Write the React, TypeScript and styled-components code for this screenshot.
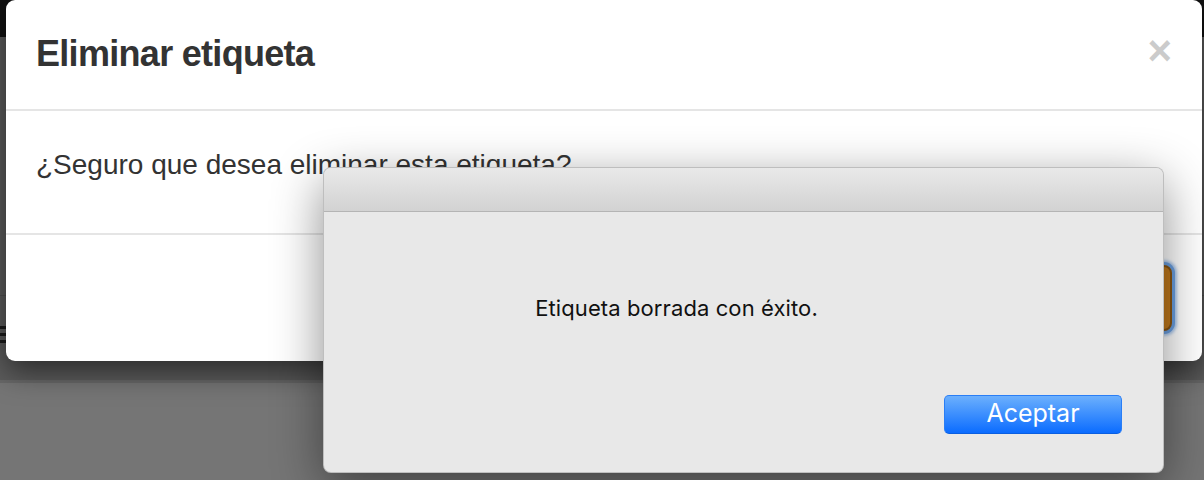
import React from "react";
import styled, { createGlobalStyle } from "styled-components";

const GlobalStyle = createGlobalStyle`
	html, body {
		margin: 0;
		padding: 0;
		background: #757575;
	}
	* {
		box-sizing: border-box;
	}
`;

const Page = styled.div`
	position: relative;
	width: 1204px;
	height: 480px;
	overflow: hidden;
	display: flex;
	flex-direction: column;
	background: #757575;
	font-family: "Liberation Sans", Arial, sans-serif;
`;

const NavBar = styled.div`
	height: 37px;
	background: #111111;
	flex-shrink: 0;
`;

const Content = styled.div`
	height: 343px;
	background: #5c5c5c;
	display: flex;
	flex-direction: column;
	flex-shrink: 0;
`;

const ContentRow = styled.div`
	height: 259px;
	border-bottom: 1px solid #505050;
`;

const MenuIcon = styled.div`
	margin-top: 30px;
	display: flex;
	flex-direction: column;
	gap: 4px;
	width: 20px;
	span {
		display: block;
		height: 3px;
		background: #1c1c1c;
	}
`;

const BottomArea = styled.div`
	flex: 1;
	background: #757575;
	border-top: 3px solid #686868;
`;

const Modal = styled.div`
	position: absolute;
	left: 6px;
	top: 0;
	width: 1196px;
	height: 361px;
	background: #ffffff;
	border-radius: 9px;
	box-shadow: 0 10px 30px rgba(0, 0, 0, 0.55);
	display: flex;
	flex-direction: column;
	color: #333333;
`;

const ModalHeader = styled.div`
	display: flex;
	justify-content: space-between;
	align-items: flex-start;
	padding: 28px 30px 30px 30px;
	border-bottom: 2px solid #e5e5e5;
`;

const ModalTitle = styled.h4`
	margin: 0;
	font-size: 36px;
	font-weight: 700;
	letter-spacing: -0.7px;
	line-height: 1.42857;
	color: #333333;
`;

const CloseButton = styled.span`
	margin-top: 2px;
	font-size: 42px;
	font-weight: 700;
	line-height: 1;
	color: #000000;
	opacity: 0.2;
`;

const ModalBody = styled.div`
	padding: 34px 30px 48px 30px;
	font-size: 28px;
	line-height: 40px;
`;

const ModalFooter = styled.div`
	display: flex;
	justify-content: flex-end;
	gap: 10px;
	padding: 30px 30px 0 30px;
	border-top: 2px solid #e5e5e5;
`;

const FooterButton = styled.button<{ $variant: "default" | "warning" }>`
	height: 66px;
	padding: 0 24px;
	border-radius: 8px;
	font-family: "Liberation Sans", Arial, sans-serif;
	font-size: 28px;
	border: 2px solid ${(p) => (p.$variant === "warning" ? "#8a5510" : "#cccccc")};
	background: ${(p) => (p.$variant === "warning" ? "#c27a1c" : "#ffffff")};
	color: ${(p) => (p.$variant === "warning" ? "#ffffff" : "#333333")};
	box-shadow: ${(p) =>
		p.$variant === "warning"
			? "0 0 0 3px #6a9fe0, 0 0 3px 5px rgba(106, 159, 224, 0.55)"
			: "none"};
`;

const Alert = styled.div`
	position: absolute;
	left: 323px;
	top: 167px;
	width: 841px;
	height: 306px;
	border-radius: 8px;
	background: #e8e8e8;
	border: 1px solid rgba(0, 0, 0, 0.18);
	box-shadow: 0 14px 50px rgba(0, 0, 0, 0.45);
	display: flex;
	flex-direction: column;
	overflow: hidden;
	font-family: Inter, "Noto Sans", sans-serif;
`;

const AlertTitleBar = styled.div`
	height: 44px;
	flex-shrink: 0;
	background: linear-gradient(#e9e9e9, #d2d2d2);
	border-bottom: 1px solid #b4b4b4;
`;

const AlertBody = styled.div`
	flex: 1;
	display: flex;
	flex-direction: column;
	justify-content: space-between;
	padding: 83px 41px 38px 0;
`;

const AlertMessage = styled.p`
	margin: 0;
	padding-right: 93px;
	text-align: center;
	font-size: 22px;
	line-height: 26px;
	letter-spacing: 0.1px;
	color: #111111;
`;

const AlertActions = styled.div`
	display: flex;
	justify-content: flex-end;
`;

const AlertButton = styled.button`
	width: 178px;
	height: 39px;
	border-radius: 5px;
	border: 1px solid #2a7ef5;
	border-bottom-color: #0b5fe0;
	background: linear-gradient(#6cb0fd, #0b6cff);
	color: #ffffff;
	font-family: Inter, "Noto Sans", sans-serif;
	font-size: 25px;
	line-height: 1;
	padding: 0 0 2px 0;
`;

const App = () => {
	return (
		<Page>
			<GlobalStyle />
			<NavBar />
			<Content>
				<ContentRow />
				<MenuIcon>
					<span />
					<span />
					<span />
				</MenuIcon>
			</Content>
			<BottomArea />

			<Modal>
				<ModalHeader>
					<ModalTitle>Eliminar etiqueta</ModalTitle>
					<CloseButton>×</CloseButton>
				</ModalHeader>
				<ModalBody>¿Seguro que desea eliminar esta etiqueta?</ModalBody>
				<ModalFooter>
					<FooterButton $variant="default">Cancelar</FooterButton>
					<FooterButton $variant="warning">Eliminar</FooterButton>
				</ModalFooter>
			</Modal>

			<Alert>
				<AlertTitleBar />
				<AlertBody>
					<AlertMessage>Etiqueta borrada con éxito.</AlertMessage>
					<AlertActions>
						<AlertButton>Aceptar</AlertButton>
					</AlertActions>
				</AlertBody>
			</Alert>
		</Page>
	);
};

export default App;
